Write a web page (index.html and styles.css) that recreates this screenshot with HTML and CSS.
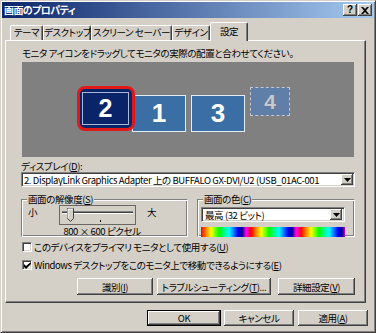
FILE: index.html
```html
<!DOCTYPE html>
<html lang="ja">
<head>
<meta charset="utf-8">
<title>画面のプロパティ</title>
<link rel="stylesheet" href="styles.css">
</head>
<body>
<div class="win">
  <div class="titlebar">
    <span class="title">画面のプロパティ</span>
    <div class="tbtns">
      <span class="tbtn help">?</span>
      <span class="tbtn close"><svg width="8" height="7" viewBox="0 0 8 7"><path d="M0 0h2l2 2 2-2h2L5 3.5 8 7H6L4 5 2 7H0l3-3.5z" fill="#000"/></svg></span>
    </div>
  </div>
  <div class="main">
    <div class="tabs">
      <span class="tab t1">テーマ</span>
      <span class="tab t2">デスクトップ</span>
      <span class="tab t3">スクリーン セーバー</span>
      <span class="tab t4">デザイン</span>
      <span class="tab sel">設定</span>
    </div>
    <div class="panel">
      <p class="hint">モニタ アイコンをドラッグしてモニタの実際の配置と合わせてください。</p>
      <div class="canvas">
        <div class="mon m1">1</div>
        <div class="mon m3">3</div>
        <div class="mon m4">4</div>
        <div class="ring"><div class="m2">2</div></div>
      </div>
      <div class="label">ディスプレイ(<u>D</u>):</div>
      <div class="select">
        <span class="seltext">2. DisplayLink Graphics Adapter 上の BUFFALO GX-DVI/U2 (USB_01AC-001</span>
        <span class="drop"><svg width="7" height="4" viewBox="0 0 7 4"><path d="M0 0h7L3.5 4z" fill="#000"/></svg></span>
      </div>
      <div class="groups">
        <div class="grp res">
          <span class="legend">画面の解像度(<u>S</u>)</span>
          <div class="sliderrow">
            <span class="small">小</span>
            <svg class="slider" width="77" height="20" viewBox="0 0 77 20">
              <rect x="0.5" y="0.5" width="76" height="19" fill="none" stroke="#000" stroke-dasharray="1 1"/>
              <rect x="3" y="6" width="71" height="1" fill="#808080"/>
              <rect x="3" y="7" width="71" height="1" fill="#404040"/>
              <rect x="3" y="8" width="71" height="1" fill="#fff"/>
              <rect x="41" y="15" width="1" height="2" fill="#000"/>
              <path d="M8.5 3.5h6v10l-3 3-3-3z" fill="#d4d0c8" stroke="#404040"/>
              <path d="M9 13V4h5" fill="none" stroke="#fff"/>
            </svg>
            <span class="big">大</span>
          </div>
          <div class="restext">800 × 600 ピクセル</div>
        </div>
        <div class="grp col">
          <span class="legend">画面の色(<u>C</u>)</span>
          <div class="combo">
            <span class="combotext">最高 (32 ビット)</span>
            <span class="drop"><svg width="7" height="4" viewBox="0 0 7 4"><path d="M0 0h7L3.5 4z" fill="#000"/></svg></span>
          </div>
          <div class="colorbar"></div>
        </div>
      </div>
      <div class="chkrow"><span class="chk"></span><span>このデバイスをプライマリ モニタとして使用する(<u>U</u>)</span></div>
      <div class="chkrow"><span class="chk"><svg width="7" height="7" viewBox="0 0 7 7"><path d="M0 2v3l2 2 5-5V-0L2 4z" fill="#000"/></svg></span><span>Windows デスクトップをこのモニタ上で移動できるようにする(<u>E</u>)</span></div>
      <div class="btnrow">
        <span class="btn b-id">識別(<u>I</u>)</span>
        <span class="btn b-tr">トラブルシューティング(<u>T</u>)...</span>
        <span class="btn b-adv">詳細設定(<u>V</u>)</span>
      </div>
    </div>
    <div class="okrow">
      <span class="btn ok">OK</span>
      <span class="btn cancel">キャンセル</span>
      <span class="btn apply">適用(<u>A</u>)</span>
    </div>
  </div>
</div>
</body>
</html>
```
FILE: styles.css
```css
* { box-sizing: border-box; margin: 0; padding: 0; }
body {
  width: 376px; height: 333px; overflow: hidden;
  background: #d4d0c8;
  font-family: "Noto Sans CJK JP", "Noto Sans", sans-serif;
  font-size: 9.5px; line-height: 12px;
  letter-spacing: -0.4px;
  font-feature-settings: "palt";
  color: #000;
  white-space: nowrap;
}
u { text-decoration: underline; text-underline-offset: 1px; }
.win {
  width: 376px; height: 333px;
  background: #d4d0c8;
  border: 1px solid; border-color: #d4d0c8 #404040 #404040 #d4d0c8;
  box-shadow: inset 1px 1px #fff, inset -1px -1px #808080;
  padding: 1px;
  display: flex; flex-direction: column;
}
.titlebar {
  height: 16px; flex: none;
  background: linear-gradient(90deg, #0a246a, #a6caf0);
  display: flex; align-items: center; justify-content: space-between;
  padding: 0 2px 0 2px;
}
.title { color: #fff; font-weight: bold; font-size: 10px; letter-spacing: -0.6px; line-height: 16px; }
.tbtns { display: flex; }
.tbtn {
  width: 14px; height: 12px;
  background: #d4d0c8;
  box-shadow: inset -1px -1px #404040, inset 1px 1px #fff, inset -2px -2px #808080;
  display: flex; align-items: center; justify-content: center;
  font: bold 10px/12px "Liberation Sans", sans-serif; letter-spacing: 0;
}
.help { margin-right: 1px; }
.main { padding: 0 6px 0 3px; display: flex; flex-direction: column; }
.tabs {
  display: flex; align-items: flex-end;
  height: 18px; margin-top: 4px; padding-left: 5px;
  position: relative; z-index: 1;
}
.tab {
  height: 15px; line-height: 13px; text-align: center;
  border-top: 1px solid #fff; border-left: 1px solid #fff;
  border-right: 1px solid #404040;
  box-shadow: inset -1px 0 #808080;
  border-radius: 2px 2px 0 0;
}
.t1 { width: 33px; }
.t2 { width: 48px; }
.t3 { width: 81px; }
.t4 { width: 38px; }
.sel {
  width: 38px; height: 19px; line-height: 16px;
  background: #d4d0c8; margin-bottom: -1px;
}
.panel {
  width: 361px; height: 263px;
  border: 1px solid; border-color: #fff #404040 #404040 #fff;
  box-shadow: inset -1px -1px #808080;
  padding: 6px 10px 0 15px;
  display: flex; flex-direction: column;
}
.hint { padding-left: 1px; }
.canvas {
  position: relative;
  width: 332px; height: 95px; margin: 3px 0 0 1px;
  background: #808080;
}
.mon {
  position: absolute;
  background: #3a6ea5; border: 1px solid #e4ecf4;
  color: #fff; font: bold 26px/35px "Liberation Sans", sans-serif;
  letter-spacing: 0;
  text-align: center;
}
.m1 { left: 110px; top: 33px; width: 54px; height: 37px; }
.m3 { left: 169px; top: 33px; width: 54px; height: 37px; }
.m4 {
  left: 228px; top: 25px; width: 40px; height: 29px;
  background: #5f7fa8; border: 1px dashed #c8c8c8;
  color: #c4c8d0; font-size: 21px; line-height: 27px;
  text-shadow: 1px 1px 0 #6c7686;
}
.ring {
  position: absolute; left: 55px; top: 24px; width: 58px; height: 45px;
  border: 3px solid #e01818; border-radius: 8px;
  background: #0a246a; padding: 3px 3px 3px 2px;
}
.m2 {
  height: 100%;
  border: 1px solid #a8b8d8;
  color: #fff; font: bold 25px/31px "Liberation Sans", sans-serif;
  letter-spacing: 0;
  text-align: center;
}
.label { margin-top: 4px; line-height: 11px; }
.select {
  height: 15px; width: 334px;
  background: #fff;
  border: 1px solid; border-color: #808080 #fff #fff #808080;
  box-shadow: inset 1px 1px #404040, inset -1px -1px #d4d0c8;
  display: flex; align-items: center; padding: 0 1px 0 2px;
  overflow: hidden;
}
.seltext { flex: 1; overflow: hidden; line-height: 12px; }
.drop {
  width: 12px; height: 11px; flex: none;
  background: #d4d0c8;
  box-shadow: inset -1px -1px #404040, inset 1px 1px #fff, inset -2px -2px #808080;
  display: flex; align-items: center; justify-content: center;
}
.groups { display: flex; gap: 9px; margin-top: 12px; }
.grp {
  position: relative; height: 38px;
  border: 1px solid; border-color: #808080 #fff #fff #808080;
  box-shadow: inset 1px 1px #fff, inset -1px -1px #808080;
}
.res { width: 167px; }
.col { width: 158px; padding: 7px 0 0 3px; }
.legend {
  position: absolute; top: -7px; left: 5px;
  background: #d4d0c8; padding: 0 1px; line-height: 12px;
}
.sliderrow { display: flex; align-items: flex-start; margin-top: 5px; }
.small { margin: 1px 0 0 6px; width: 12px; }
.slider { margin-left: 19px; display: block; }
.big { margin: 1px 0 0 11px; }
.restext { margin: 1px 0 0 38px; width: 84px; text-align: center; line-height: 10px; }
.combo {
  width: 144px; height: 15px; background: #fff;
  border: 1px solid; border-color: #808080 #fff #fff #808080;
  box-shadow: inset 1px 1px #404040, inset -1px -1px #d4d0c8;
  display: flex; align-items: center; padding: 0 2px 0 3px;
}
.combotext { flex: 1; line-height: 12px; }
.colorbar {
  width: 144px; height: 10px; margin-top: 5px;
  background: repeating-linear-gradient(90deg, #f00 0, #ff8000 5px, #ff0 10px, #0f0 18px, #0ff 28px, #00f 37px, #000080 41px, #f0f 45px, #f00 50px);
}
.chkrow { display: flex; align-items: center; height: 18px; }
.groups + .chkrow { margin-top: 1px; }
.chk {
  width: 10px; height: 10px; margin: 0 2px 0 1px; flex: none;
  background: #fff;
  border: 1px solid; border-color: #808080 #fff #fff #808080;
  box-shadow: inset 1px 1px #404040, inset -1px -1px #d4d0c8;
  display: flex; align-items: center; justify-content: center;
}
.btnrow { display: flex; justify-content: flex-end; margin-top: 4px; }
.btn {
  height: 17px; background: #d4d0c8;
  box-shadow: inset -1px -1px #404040, inset 1px 1px #fff, inset -2px -2px #808080;
  display: flex; align-items: center; justify-content: center;
}
.b-id { width: 76px; }
.b-tr { width: 114px; margin-left: 4px; }
.b-adv { width: 77px; margin-left: 7px; }
.okrow { display: flex; justify-content: flex-end; margin-top: 7px; }
.okrow .btn { height: 16px; }
.ok { width: 74px; border: 1px solid #000; }
.cancel { width: 70px; margin-left: 3px; }
.apply { width: 70px; margin-left: 4px; }
```
